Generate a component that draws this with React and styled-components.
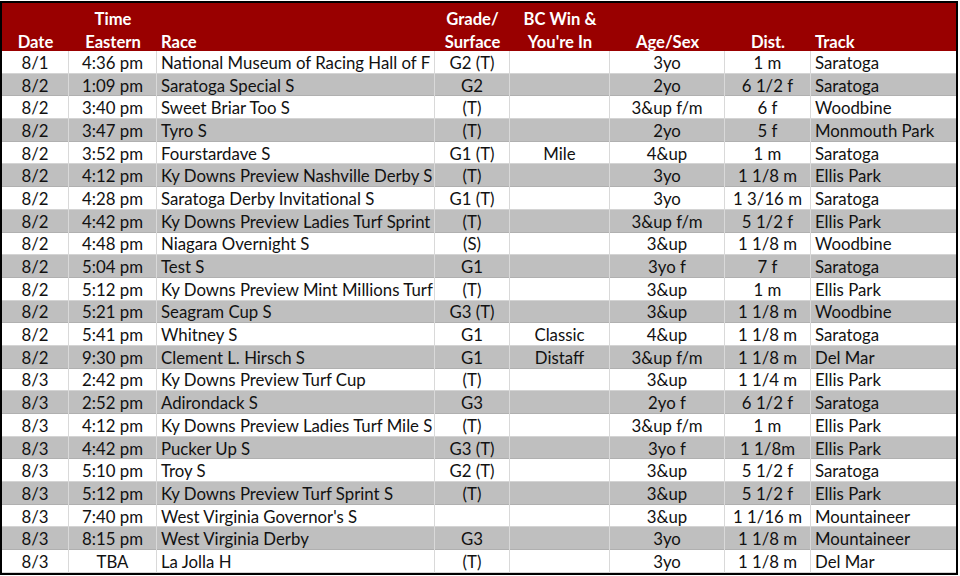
import React from "react";
import styled, { createGlobalStyle } from "styled-components";

const Global = createGlobalStyle`
  html, body { margin: 0; padding: 0; background: #fff; }
  body { font-family: "Lato", "Open Sans", sans-serif; }
`;

const COLS = "67px 88px 278px 75px 100px 115px 86px 145px";

const Sheet = styled.div`
  margin-top: 1px;
  width: 954px;
  border: 2px solid #000;
  background: #fff;
`;

const HeaderRow = styled.div`
  display: grid;
  grid-template-columns: ${COLS};
  height: 48px;
  background: #990000;
  color: #fff;
  font-weight: 700;
  font-size: 16.6px;
  line-height: 18px;
`;

const HeadCell = styled.div`
  display: flex;
  flex-direction: column;
  justify-content: flex-end;
  gap: 5px;
  align-items: ${(p) => (p.$left ? "flex-start" : "center")};
  padding: 0 4px;
  text-align: ${(p) => (p.$left ? "left" : "center")};
  white-space: nowrap;
`;

const Row = styled.div`
  display: grid;
  grid-template-columns: ${COLS};
  height: 22.7px;
  background: ${(p) => (p.$shade ? "#bfbfbf" : "#fff")};
  box-shadow: inset 0 -1px 0 ${(p) => (p.$shade ? "#b0b0b0" : "#d4d4d4")};
  font-size: 16.8px;
  color: #111;
`;

const Cell = styled.div`
  display: flex;
  align-items: center;
  justify-content: ${(p) => (p.$left ? "flex-start" : "center")};
  padding: 1px ${(p) => (p.$left ? "4px" : "2px")} 0;
  border-right: 1px solid #d9d9d9;
  white-space: nowrap;
  overflow: hidden;
  line-height: 22px;
  &:last-child { border-right: none; }
`;

const rows = [
  ["8/1", "4:36 pm", "National Museum of Racing Hall of F", "G2 (T)", "", "3yo", "1 m", "Saratoga"],
  ["8/2", "1:09 pm", "Saratoga Special S", "G2", "", "2yo", "6 1/2 f", "Saratoga"],
  ["8/2", "3:40 pm", "Sweet Briar Too S", "(T)", "", "3&up f/m", "6 f", "Woodbine"],
  ["8/2", "3:47 pm", "Tyro S", "(T)", "", "2yo", "5 f", "Monmouth Park"],
  ["8/2", "3:52 pm", "Fourstardave S", "G1 (T)", "Mile", "4&up", "1 m", "Saratoga"],
  ["8/2", "4:12 pm", "Ky Downs Preview Nashville Derby S", "(T)", "", "3yo", "1 1/8 m", "Ellis Park"],
  ["8/2", "4:28 pm", "Saratoga Derby Invitational S", "G1 (T)", "", "3yo", "1 3/16 m", "Saratoga"],
  ["8/2", "4:42 pm", "Ky Downs Preview Ladies Turf Sprint", "(T)", "", "3&up f/m", "5 1/2 f", "Ellis Park"],
  ["8/2", "4:48 pm", "Niagara Overnight S", "(S)", "", "3&up", "1 1/8 m", "Woodbine"],
  ["8/2", "5:04 pm", "Test S", "G1", "", "3yo f", "7 f", "Saratoga"],
  ["8/2", "5:12 pm", "Ky Downs Preview Mint Millions Turf", "(T)", "", "3&up", "1 m", "Ellis Park"],
  ["8/2", "5:21 pm", "Seagram Cup S", "G3 (T)", "", "3&up", "1 1/8 m", "Woodbine"],
  ["8/2", "5:41 pm", "Whitney S", "G1", "Classic", "4&up", "1 1/8 m", "Saratoga"],
  ["8/2", "9:30 pm", "Clement L. Hirsch S", "G1", "Distaff", "3&up f/m", "1 1/8 m", "Del Mar"],
  ["8/3", "2:42 pm", "Ky Downs Preview Turf Cup", "(T)", "", "3&up", "1 1/4 m", "Ellis Park"],
  ["8/3", "2:52 pm", "Adirondack S", "G3", "", "2yo f", "6 1/2 f", "Saratoga"],
  ["8/3", "4:12 pm", "Ky Downs Preview Ladies Turf Mile S", "(T)", "", "3&up f/m", "1 m", "Ellis Park"],
  ["8/3", "4:42 pm", "Pucker Up S", "G3 (T)", "", "3yo f", "1 1/8m", "Ellis Park"],
  ["8/3", "5:10 pm", "Troy S", "G2 (T)", "", "3&up", "5 1/2 f", "Saratoga"],
  ["8/3", "5:12 pm", "Ky Downs Preview Turf Sprint S", "(T)", "", "3&up", "5 1/2 f", "Ellis Park"],
  ["8/3", "7:40 pm", "West Virginia Governor's S", "", "", "3&up", "1 1/16 m", "Mountaineer"],
  ["8/3", "8:15 pm", "West Virginia Derby", "G3", "", "3yo", "1 1/8 m", "Mountaineer"],
  ["8/3", "TBA", "La Jolla H", "(T)", "", "3yo", "1 1/8 m", "Del Mar"],
];

const heads = [
  [["Date"], false],
  [["Time", "Eastern"], false],
  [["Race"], true],
  [["Grade/", "Surface"], false],
  [["BC Win &", "You're In"], false],
  [["Age/Sex"], false],
  [["Dist."], false],
  [["Track"], true],
];

const leftCols = new Set([2, 7]);

export default function App() {
  return (
    <>
      <Global />
      <Sheet>
        <HeaderRow>
          {heads.map(([lines, left], i) => (
            <HeadCell key={i} $left={left}>
              {lines.map((l) => (
                <span key={l}>{l}</span>
              ))}
            </HeadCell>
          ))}
        </HeaderRow>
        {rows.map((r, i) => (
          <Row key={i} $shade={i % 2 === 1}>
            {r.map((c, j) => (
              <Cell key={j} $left={leftCols.has(j)}>
                {c}
              </Cell>
            ))}
          </Row>
        ))}
      </Sheet>
    </>
  );
}
